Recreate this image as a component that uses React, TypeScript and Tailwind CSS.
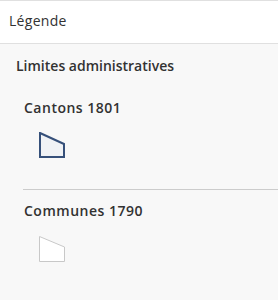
import React from "react";

export default function App() {
  return (
    <div
      className="w-[278px] h-[300px] bg-[#f8f8f8] text-[#323232] overflow-hidden"
      style={{ fontFamily: "'Open Sans', Lato, sans-serif" }}
    >
      <div className="h-[44px] bg-white border-t border-b border-[#e0e0e0] pl-[9px] pt-[10px]">
        <div className="text-[14px] leading-[20px] tracking-[0.3px]">Légende</div>
      </div>
      <div className="pl-4 pt-3">
        <div className="text-[14px] leading-[20px] font-semibold">Limites administratives</div>
      </div>
      <div className="pl-6 mt-[22px]">
        <div className="text-[14px] leading-[20px] font-semibold tracking-[0.5px]">Cantons 1801</div>
        <div className="pl-[15px] mt-[14px]">
          <svg width="26" height="26" viewBox="0 0 26 26" className="block">
            <polygon
              points="1,1 25,12 25,25 1,25"
              fill="#f0f2f5"
              stroke="#36507a"
              strokeWidth="2"
            />
          </svg>
        </div>
      </div>
      <div className="ml-[23px] mt-[31px] border-t border-[#cccccc]" />
      <div className="pl-6 mt-[11px]">
        <div className="text-[14px] leading-[20px] font-semibold tracking-[0.5px]">Communes 1790</div>
        <div className="pl-[15px] mt-[15px]">
          <svg width="26" height="26" viewBox="0 0 26 26" className="block">
            <polygon
              points="0.5,0.5 25.5,11 25.5,25.5 0.5,25.5"
              fill="#ffffff"
              stroke="#c8c8c8"
              strokeWidth="1"
            />
          </svg>
        </div>
      </div>
    </div>
  );
}
